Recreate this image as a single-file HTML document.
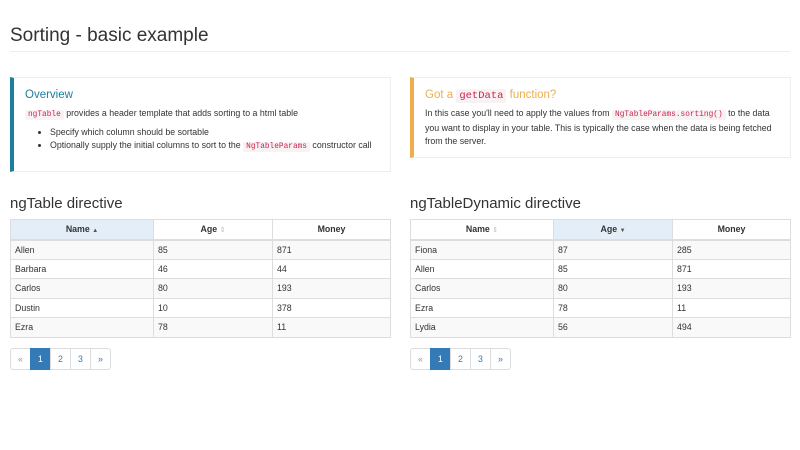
<!DOCTYPE html>
<html><head><meta charset="utf-8"><style>
*{box-sizing:border-box}
body{margin:0;width:800px;height:450px;background:#fff;font-family:"Liberation Sans",sans-serif;color:#333;font-size:8.8px;overflow:hidden;position:relative}
h1{position:absolute;left:10px;top:23px;margin:0;font-weight:400;font-size:19px;line-height:26px}
.hr{position:absolute;left:10px;top:51px;width:780px;height:1px;background:#eee}
.call{position:absolute;border:1px solid #eee;border-left-width:4px;padding:10px 11px}
.call h4{margin:0 0 3px;font-weight:400;font-size:11.5px;line-height:15px}
code{font-family:"Liberation Mono",monospace;color:#c7254e;background:#f9f2f4;padding:1px 3px;border-radius:2px;font-size:7.8px}
p{margin:0;line-height:14px}
ul{margin:4px 0 0;padding-left:25px;line-height:13px}
h3{position:absolute;margin:0;font-weight:400;font-size:15px;line-height:20px;top:194px}
table{position:absolute;top:219px;width:381px;border-collapse:collapse;border:1px solid #ddd;font-size:8.8px}
td,th{border:1px solid #ddd;padding:0 4px;height:19.5px;text-align:left;font-weight:400}
th{text-align:center;font-weight:700;height:20px;border-bottom:2px solid #ddd}
th.s{background:#e3eef8}
tbody tr:nth-child(odd){background:#f9f9f9}
.pg{position:absolute;top:348px;display:flex}
.pg span{flex:none;width:21px;height:22px;border:1px solid #ddd;margin-left:-1px;display:flex;align-items:center;justify-content:center;color:#337ab7;font-size:8.8px}
.pg span:first-child{border-radius:3px 0 0 3px;color:#999;margin-left:0}
.pg span:last-child{border-radius:0 3px 3px 0}
.pg span.a{background:#337ab7;border-color:#337ab7;color:#fff}
.ar{font-size:6px;color:#555;font-weight:400}
.ar2{font-size:7px;color:#bbb;font-weight:400}
</style></head><body>
<h1>Sorting - basic example</h1>
<div class="hr"></div>
<div class="call" style="left:10px;top:77px;width:381px;height:95px;border-left-color:#1b809e">
<h4 style="color:#1b809e">Overview</h4>
<p><code>ngTable</code> provides a header template that adds sorting to a html table</p>
<ul><li>Specify which column should be sortable</li><li>Optionally supply the initial columns to sort to the <code>NgTableParams</code> constructor call</li></ul>
</div>
<div class="call" style="left:410px;top:77px;width:381px;height:81px;border-left-color:#f0ad4e">
<h4 style="color:#f0ad4e">Got a <code style="font-size:10.5px">getData</code> function?</h4>
<p style="line-height:13px">In this case you'll need to apply the values from <code>NgTableParams.sorting()</code> to the data you want to display in your table. This is typically the case when the data is being fetched from the server.</p>
</div>
<h3 style="left:10px">ngTable directive</h3>
<h3 style="left:410px">ngTableDynamic directive</h3>
<table style="left:10px"><colgroup><col style="width:143px"><col style="width:119px"><col></colgroup>
<thead><tr><th class="s">Name <span class="ar">▲</span></th><th>Age <span class="ar2">⇕</span></th><th>Money</th></tr></thead>
<tbody><tr><td>Allen</td><td>85</td><td>871</td></tr><tr><td>Barbara</td><td>46</td><td>44</td></tr><tr><td>Carlos</td><td>80</td><td>193</td></tr><tr><td>Dustin</td><td>10</td><td>378</td></tr><tr><td>Ezra</td><td>78</td><td>11</td></tr></tbody></table>
<table style="left:410px"><colgroup><col style="width:143px"><col style="width:119px"><col></colgroup>
<thead><tr><th>Name <span class="ar2">⇕</span></th><th class="s">Age <span class="ar">▼</span></th><th>Money</th></tr></thead>
<tbody><tr><td>Fiona</td><td>87</td><td>285</td></tr><tr><td>Allen</td><td>85</td><td>871</td></tr><tr><td>Carlos</td><td>80</td><td>193</td></tr><tr><td>Ezra</td><td>78</td><td>11</td></tr><tr><td>Lydia</td><td>56</td><td>494</td></tr></tbody></table>
<div class="pg" style="left:10px"><span>«</span><span class="a">1</span><span>2</span><span>3</span><span>»</span></div>
<div class="pg" style="left:410px"><span>«</span><span class="a">1</span><span>2</span><span>3</span><span>»</span></div>
</body></html>
